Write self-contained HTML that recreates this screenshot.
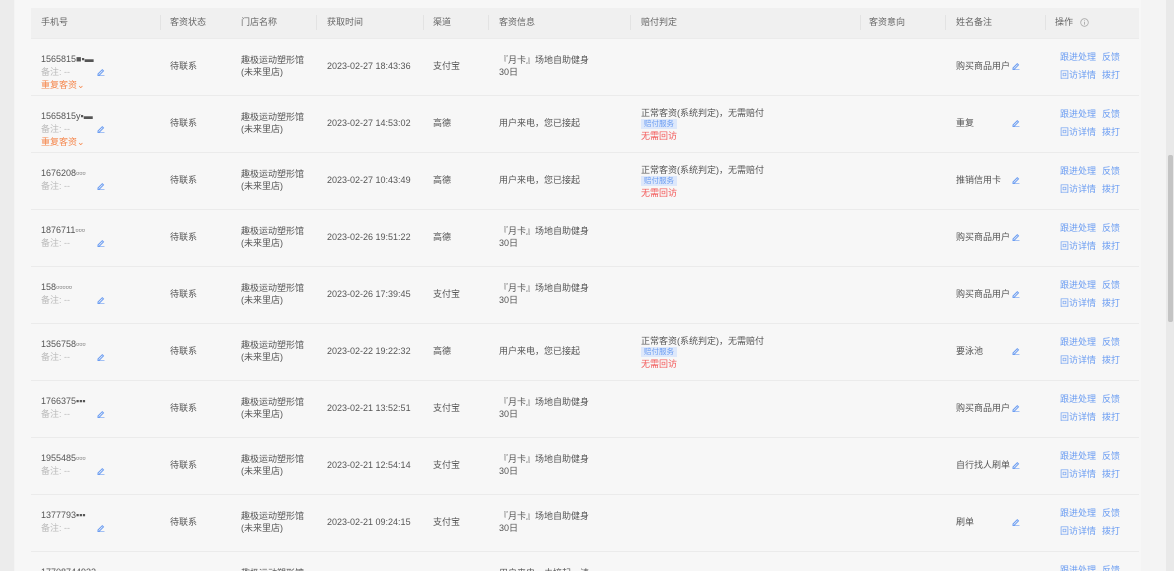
<!DOCTYPE html>
<html style="width:1174px;height:571px;overflow:hidden"><head><meta charset="utf-8"><style>
*{margin:0;padding:0;box-sizing:border-box}
body{width:1174px;height:571px;overflow:hidden;background:#f4f4f4;font-family:"Liberation Sans","Noto Sans CJK SC",sans-serif;font-size:9px;color:#555;position:relative}
.strip{position:absolute;left:0;top:0;width:14px;height:571px;background:#ececec}
.card{position:absolute;left:15px;top:0;width:1126px;height:571px;background:#f7f7f7}
.head{position:absolute;left:31px;top:8px;width:1108px;height:30px;background:#f0f0f0}
.t{position:absolute;white-space:nowrap;line-height:12px}
.h{color:#666}
.sep{position:absolute;top:15px;width:1px;height:15px;background:#e3e3e3}
.line{position:absolute;left:31px;width:1108px;height:1px;background:#ebebeb}
.blue{color:#6a9cf2}
.gray{color:#bbb}
.org{color:#f5854a}
.red{color:#f35555}
.tag{position:absolute;background:#dde8fb;color:#6a9cf2;font-size:7.5px;line-height:10px;padding:0 3px}
.pen{position:absolute;width:8px;height:8px}
.sb{position:absolute;left:1166px;top:0;width:8px;height:571px;background:#e9e9e9}
.th{position:absolute;left:1168px;top:155px;width:5px;height:167px;background:#c4c4c4;border-radius:2px}
</style></head><body>
<div class="strip"></div><div class="card"></div>
<div class="head"></div>
<div class="sb"></div><div class="th"></div>
<div id="c"></div>
<script>
var H='';
function t(x,y,s,c){H+='<div class="t '+(c||'')+'" style="left:'+x+'px;top:'+(y-6)+'px">'+s+'</div>';}
function pen(x,y){H+='<svg class="pen" style="left:'+x+'px;top:'+(y-4)+'px" viewBox="0 0 8 8"><path d="M1 6L1 7.2L2.2 7.2L6.5 2.9L5.3 1.7Z" fill="none" stroke="#6a9cf2" stroke-width="1"/><path d="M0.5 7.8H7.5" stroke="#6a9cf2" stroke-width="0.8"/></svg>';}
var hs=[[41,'手机号'],[170,'客资状态'],[241,'门店名称'],[327,'获取时间'],[433,'渠道'],[499,'客资信息'],[641,'赔付判定'],[869,'客资意向'],[956,'姓名备注'],[1055,'操作']];
hs.forEach(function(h){t(h[0],22,h[1],'h')});
H+='<svg style="position:absolute;left:1080px;top:18px" width="9" height="9" viewBox="0 0 9 9"><circle cx="4.5" cy="4.5" r="3.8" fill="none" stroke="#aaa" stroke-width=".8"/><path d="M4.5 4v2.6M4.5 2.4v.8" stroke="#aaa" stroke-width=".9"/></svg>';
[160,316,423,488,630,860,945,1045].forEach(function(x){H+='<div class="sep" style="left:'+x+'px"></div>'});
var M='『月卡』场地自助健身',U='用户来电，您已接起';
var rows=[
['1565815■▪▬',1,'2023-02-27 18:43:36','支付宝',M,0,'购买商品用户'],
['1565815y▪▬',1,'2023-02-27 14:53:02','高德',U,1,'重复'],
['1676208▫▫▫',0,'2023-02-27 10:43:49','高德',U,1,'推销信用卡'],
['1876711▫▫▫',0,'2023-02-26 19:51:22','高德',M,0,'购买商品用户'],
['158▫▫▫▫▫',0,'2023-02-26 17:39:45','支付宝',M,0,'购买商品用户'],
['1356758▫▫▫',0,'2023-02-22 19:22:32','高德',U,1,'要泳池'],
['1766375▪▪▪',0,'2023-02-21 13:52:51','支付宝',M,0,'购买商品用户'],
['1955485▫▫▫',0,'2023-02-21 12:54:14','支付宝',M,0,'自行找人刷单'],
['1377793▪▪▪',0,'2023-02-21 09:24:15','支付宝',M,0,'刷单'],
['17708744932',0,'','', '用户来电，未接起，请',0,'']];
rows.forEach(function(r,i){
 var c=38+57*i+28;
 H+='<div class="line" style="top:'+(38+57*i)+'px"></div>';
 t(41,c-7,r[0]);t(41,c+6,'备注: --','gray');pen(97,c+6);
 if(r[1])t(41,c+19,'重复客资⌄','org');
 t(170,c,'待联系');
 t(241,c-6,'趣极运动塑形馆');t(241,c+6,'(未来里店)');
 if(r[2])t(327,c,r[2]);
 if(r[3])t(433,c,r[3]);
 if(r[4]==M){t(499,c-6,M);t(499,c+6,'30日');}else if(i==9){t(499,c-6,r[4]);}else t(499,c,r[4]);
 if(r[5]){t(641,c-10,'正常客资(系统判定)，无需赔付');H+='<div class="tag" style="left:641px;top:'+(c-4)+'px">赔付服务</div>';t(641,c+13,'无需回访','red');}
 if(r[6]){t(956,c,r[6]);pen(1012,c);}
 t(1060,c-9,'跟进处理','blue');t(1102,c-9,'反馈','blue');
 t(1060,c+9,'回访详情','blue');t(1102,c+9,'拨打','blue');
});
document.getElementById('c').innerHTML=H;
</script>
</body></html>
